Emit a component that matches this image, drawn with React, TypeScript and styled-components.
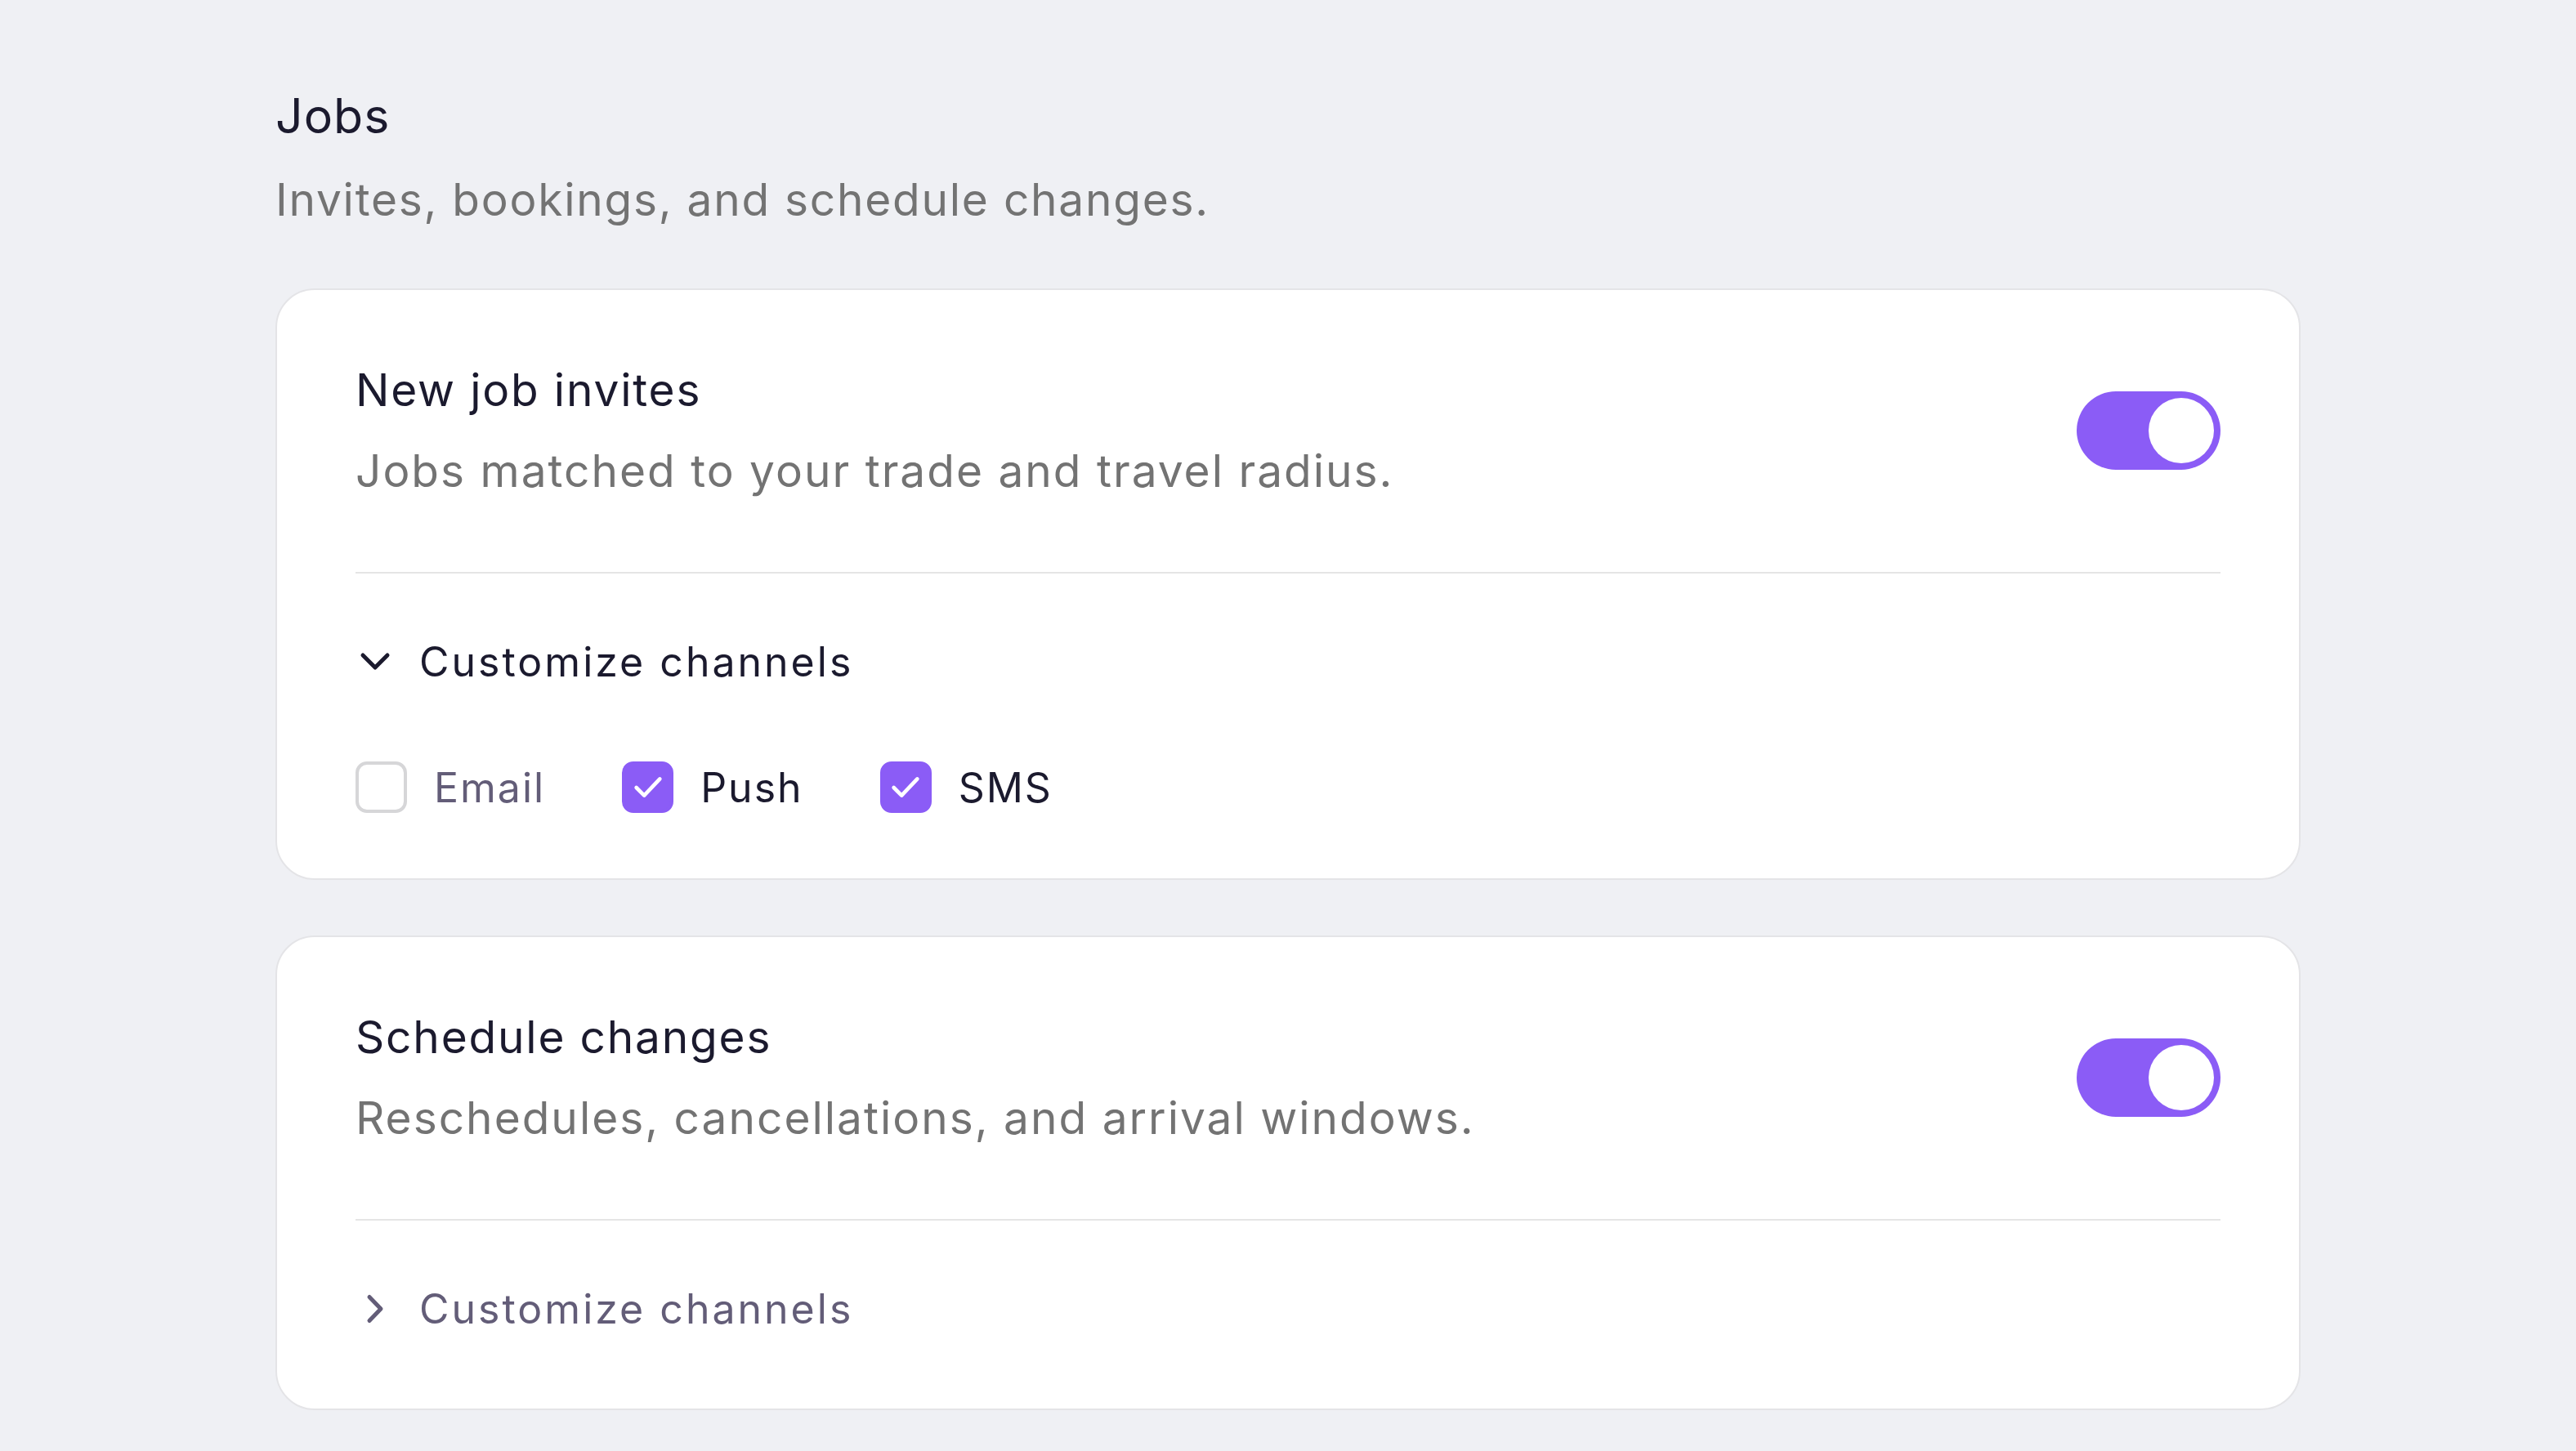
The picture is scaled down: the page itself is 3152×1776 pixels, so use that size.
import React, { useState } from "react";
import styled, { createGlobalStyle } from "styled-components";

const GlobalStyle = createGlobalStyle`
  html, body {
    margin: 0;
    padding: 0;
    background: #eff0f4;
  }
  body {
    font-family: Inter, "Noto Sans", sans-serif;
    -webkit-font-smoothing: antialiased;
  }
  * { box-sizing: border-box; }
`;

const INK = "#1b1a2e";
const MUTED = "#635d78";
const GRAY = "#737373";
const VIOLET = "#8b5cf6";

const Page = styled.main`
  min-height: 100vh;
  padding: 100px 0 80px;
`;

const Section = styled.section`
  width: 2478px;
  margin: 0 auto;
  display: flex;
  flex-direction: column;
`;

const SectionTitle = styled.h2`
  margin: 0;
  font-size: 59px;
  line-height: 84px;
  font-weight: 400;
  color: ${INK};
  letter-spacing: 1px;
`;

const SectionDesc = styled.p`
  margin: 18px 0 0;
  font-size: 55px;
  line-height: 84px;
  font-weight: 400;
  color: ${GRAY};
  letter-spacing: 1.75px;
`;

const Cards = styled.div`
  margin-top: 67px;
  display: flex;
  flex-direction: column;
  gap: 68px;
`;

const Card = styled.article`
  background: #ffffff;
  border: 2px solid #e4e4e7;
  border-radius: 48px;
  padding: 0 96px;
`;

const Header = styled.div`
  display: flex;
  align-items: center;
  justify-content: space-between;
  gap: 48px;
  padding: 80px 0 82px;
`;

const HeaderText = styled.div`
  display: flex;
  flex-direction: column;
`;

const RowTitle = styled.h3`
  margin: 0;
  font-size: 55px;
  line-height: 84px;
  font-weight: 400;
  color: ${INK};
  letter-spacing: 1.8px;
`;

const RowDesc = styled.p`
  margin: 15px 0 0;
  font-size: 55px;
  line-height: 84px;
  font-weight: 400;
  color: ${GRAY};
  letter-spacing: 2px;
`;

const Switch = styled.button<{ $on: boolean }>`
  flex-shrink: 0;
  width: 176px;
  height: 96px;
  border: 0;
  border-radius: 48px;
  padding: 8px;
  background: ${(p) => (p.$on ? VIOLET : "#d4d4d8")};
  display: flex;
  justify-content: ${(p) => (p.$on ? "flex-end" : "flex-start")};
  cursor: pointer;
`;

const Knob = styled.span`
  width: 80px;
  height: 80px;
  border-radius: 50%;
  background: #ffffff;
`;

const Divider = styled.hr`
  margin: 0;
  border: 0;
  height: 2px;
  background: #e5e5e5;
`;

const Channels = styled.div`
  padding: 66px 0 80px;
`;

const Disclosure = styled.button<{ $open: boolean }>`
  display: flex;
  align-items: center;
  gap: 30px;
  padding: 0;
  border: 0;
  background: none;
  font-family: inherit;
  font-size: 50px;
  line-height: 84px;
  font-weight: 400;
  letter-spacing: 3px;
  color: ${(p) => (p.$open ? INK : MUTED)};
  cursor: pointer;
`;

const ChevronBox = styled.svg`
  width: 48px;
  height: 48px;
  flex-shrink: 0;
`;

const CheckRow = styled.div`
  margin-top: 80px;
  display: flex;
  align-items: center;
  gap: 94px;
`;

const CheckItem = styled.label<{ $checked: boolean }>`
  display: flex;
  align-items: center;
  gap: 33px;
  font-size: 50px;
  line-height: 62px;
  letter-spacing: 2px;
  color: ${(p) => (p.$checked ? INK : MUTED)};
  cursor: pointer;
`;

const Box = styled.span<{ $checked: boolean }>`
  width: 63px;
  height: 63px;
  border-radius: 14px;
  border: 4px solid ${(p) => (p.$checked ? VIOLET : "#d6d6d8")};
  background: ${(p) => (p.$checked ? VIOLET : "#ffffff")};
  display: flex;
  align-items: center;
  justify-content: center;
`;

const HiddenInput = styled.input`
  position: absolute;
  opacity: 0;
  width: 0;
  height: 0;
`;

function Chevron({ open, color }: { open: boolean; color: string }) {
  return (
    <ChevronBox viewBox="0 0 48 48" fill="none">
      <path
        d={open ? "M9 16 L24 31 L39 16" : "M17 9.5 L31 24 L17 38.5"}
        stroke={color}
        strokeWidth={5}
        strokeLinecap="round"
        strokeLinejoin="round"
      />
    </ChevronBox>
  );
}

function CheckMark() {
  return (
    <svg width="46" height="46" viewBox="0 0 24 24" fill="none">
      <path
        d="M19.5 6.5 9.5 17 4.5 12"
        stroke="#ffffff"
        strokeWidth={2.4}
        strokeLinecap="round"
        strokeLinejoin="round"
      />
    </svg>
  );
}

type Channel = "Email" | "Push" | "SMS";

function Channel({
  name,
  checked,
  onToggle,
}: {
  name: Channel;
  checked: boolean;
  onToggle: () => void;
}) {
  return (
    <CheckItem $checked={checked}>
      <HiddenInput type="checkbox" checked={checked} onChange={onToggle} />
      <Box $checked={checked}>{checked && <CheckMark />}</Box>
      {name}
    </CheckItem>
  );
}

function NotificationCard({
  title,
  description,
  defaultOpen,
  defaultChannels,
}: {
  title: string;
  description: string;
  defaultOpen: boolean;
  defaultChannels: Record<Channel, boolean>;
}) {
  const [on, setOn] = useState(true);
  const [open, setOpen] = useState(defaultOpen);
  const [channels, setChannels] = useState(defaultChannels);
  const names: Channel[] = ["Email", "Push", "SMS"];

  return (
    <Card>
      <Header>
        <HeaderText>
          <RowTitle>{title}</RowTitle>
          <RowDesc>{description}</RowDesc>
        </HeaderText>
        <Switch
          role="switch"
          aria-checked={on}
          $on={on}
          onClick={() => setOn(!on)}
        >
          <Knob />
        </Switch>
      </Header>
      <Divider />
      <Channels>
        <Disclosure $open={open} onClick={() => setOpen(!open)}>
          <Chevron open={open} color={open ? INK : MUTED} />
          Customize channels
        </Disclosure>
        {open && (
          <CheckRow>
            {names.map((n) => (
              <Channel
                key={n}
                name={n}
                checked={channels[n]}
                onToggle={() => setChannels({ ...channels, [n]: !channels[n] })}
              />
            ))}
          </CheckRow>
        )}
      </Channels>
    </Card>
  );
}

export default function App() {
  return (
    <>
      <GlobalStyle />
      <Page>
        <Section>
          <SectionTitle>Jobs</SectionTitle>
          <SectionDesc>Invites, bookings, and schedule changes.</SectionDesc>
          <Cards>
            <NotificationCard
              title="New job invites"
              description="Jobs matched to your trade and travel radius."
              defaultOpen={true}
              defaultChannels={{ Email: false, Push: true, SMS: true }}
            />
            <NotificationCard
              title="Schedule changes"
              description="Reschedules, cancellations, and arrival windows."
              defaultOpen={false}
              defaultChannels={{ Email: false, Push: true, SMS: true }}
            />
          </Cards>
        </Section>
      </Page>
    </>
  );
}
